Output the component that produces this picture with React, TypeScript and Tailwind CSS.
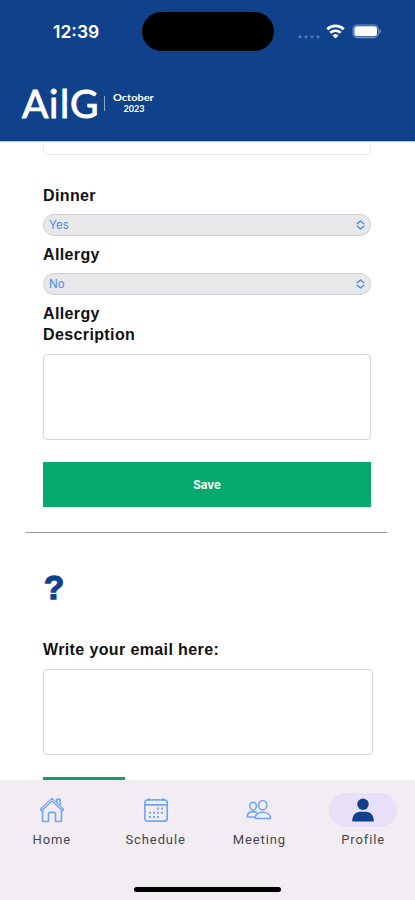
import type { ReactNode } from 'react'

function StatusBar() {
  return (
    <div className="flex h-[63px] items-center">
      <span className="ml-[53px] w-[89px] font-['Inter'] text-[17.5px] font-semibold leading-5 text-white">12:39</span>
      <div className="h-[39px] w-[132px] rounded-full bg-black" />
      <svg className="ml-6 mt-2.5" width="22" height="4" viewBox="0 0 22 4" fill="#5077b4">
        <circle cx="2" cy="1.8" r="1.6" />
        <circle cx="8" cy="1.8" r="1.6" />
        <circle cx="14" cy="1.8" r="1.6" />
        <circle cx="20" cy="1.8" r="1.6" />
      </svg>
      <svg className="ml-1.5" width="19" height="15" viewBox="0 0 19 15" fill="none" stroke="#fff" strokeWidth="2.6">
        <path d="M1.2 5.2a12 12 0 0 1 16.6 0" />
        <path d="M4.3 8.8a7.6 7.6 0 0 1 10.4 0" />
        <path d="M9.5 14.4 6.5 11.4a4.4 4.4 0 0 1 6 0z" fill="#fff" stroke="none" />
      </svg>
      <svg className="ml-[7px]" width="30" height="15" viewBox="0 0 30 15">
        <rect x="1.1" y="1" width="25" height="12.6" rx="4" fill="none" stroke="#7892c3" strokeWidth="1.2" />
        <rect x="2.4" y="2.3" width="22.6" height="10" rx="2.8" fill="#fff" />
        <path d="M27.4 5.2v4.4c1.1-.4 1.7-1.2 1.7-2.2s-.6-1.8-1.7-2.2z" fill="#7892c3" />
      </svg>
    </div>
  )
}

function Header() {
  return (
    <header className="h-[142px] shrink-0 border-b border-[#b4c3dd] bg-[#10428c]">
      <StatusBar />
      <div className="flex h-20 items-center pl-[22px] text-white">
        <span className="flex w-[82px] whitespace-nowrap font-['Lato'] text-[39px] leading-[44px] [-webkit-text-stroke:0.9px_white]">
          <span className="w-[27px]">A</span>
          <span className="w-[11px]">i</span>
          <span className="w-2.5">l</span>
          <span>G</span>
        </span>
        <span className="h-[15px] w-px bg-[#8ca5cd]" />
        <p className="ml-2 w-[42px] whitespace-nowrap text-center font-['Lato'] text-[9px] font-bold leading-[11px]">
          <span className="block origin-left scale-x-[1.22] text-left">October</span>
          <span className="block">2023</span>
        </p>
      </div>
    </header>
  )
}

function Select({ value }: { value: string }) {
  return (
    <div className="flex h-[22px] items-center justify-between rounded-full border border-[#cfcfd0] bg-[#e8e8ea] px-[5px] font-['Inter'] text-[11.5px] text-[#3f8bf2]">
      <span className="pt-0.5">{value}</span>
      <svg width="9" height="10" viewBox="0 0 9 10" fill="none" stroke="currentColor" strokeWidth="1.4" strokeLinecap="round" strokeLinejoin="round">
        <path d="M1.2 3.7 4.5 1l3.3 2.7M1.2 6.3 4.5 9l3.3-2.7" />
      </svg>
    </div>
  )
}

function Label({ children }: { children: ReactNode }) {
  return <div className="font-['Liberation_Sans'] text-base font-bold leading-[21px] tracking-[0.38px] text-[#111]">{children}</div>
}

function NavItem({ label, active, children }: { label: string; active?: boolean; children: ReactNode }) {
  return (
    <a href="#" className="flex w-[103.75px] flex-col items-center">
      <span className={active ? 'flex h-[34px] w-[68px] items-center justify-center rounded-full bg-[#e8dff8]' : 'flex h-[34px] w-[68px] items-center justify-center'}>
        {children}
      </span>
      <span className="mt-[5px] font-['Roboto'] text-[13px] leading-4 tracking-[0.9px] text-[#49454f]">{label}</span>
    </a>
  )
}

function BottomNav() {
  return (
    <nav className="flex h-[120px] shrink-0 flex-col items-center bg-[#f2edf3]">
      <div className="flex w-full pt-[13px]">
        <NavItem label="Home">
          <svg width="26" height="26" viewBox="0 0 26 26" fill="none" stroke="#70a6f4" strokeWidth="1.6" strokeLinejoin="round">
            <path d="M3.5 11.5v13h6v-7.2c0-1.2.7-1.9 1.8-1.9h3.4c1.1 0 1.8.7 1.8 1.9v7.2h6v-13" />
            <path d="m1.2 12.4 11.8-11 11.8 11-1.4 1.3L13 4 2.6 13.7z" strokeWidth="1.2" />
            <path d="M17.8 5.5V2.2h3.4v6.4" />
          </svg>
        </NavItem>
        <NavItem label="Schedule">
          <svg width="26" height="26" viewBox="0 0 26 26" fill="none" stroke="#70a6f4" strokeWidth="1.7">
            <rect x="1.8" y="2.8" width="22.4" height="21.4" rx="3" />
            <path d="M2 7.8h22M5.8 1v3M20.2 1v3" />
            <path d="M14 11.5h2m2 0h2M6 15.8h2m2 0h2m2 0h2m2 0h2M6 20h2m2 0h2m2 0h2" strokeWidth="2" />
          </svg>
        </NavItem>
        <NavItem label="Meeting">
          <svg width="26" height="22" viewBox="0 0 26 22" fill="none" stroke="#70a6f4" strokeWidth="1.6" strokeLinejoin="round">
            <ellipse cx="16.7" cy="6.2" rx="4.1" ry="4.7" />
            <path d="M9.2 19.5c0-4 3-6.2 7.5-6.2s7.8 2.2 7.8 6.2z" />
            <ellipse cx="7.1" cy="7.1" rx="3.3" ry="3.9" />
            <path d="M8.8 18H1.2c0-3.6 2.4-5.4 5.9-5.4 1.6 0 2.8.3 3.8 1" />
          </svg>
        </NavItem>
        <NavItem label="Profile" active>
          <svg width="24" height="26" viewBox="0 0 24 26" fill="#10428c">
            <circle cx="12" cy="7.2" r="5.7" />
            <path d="M1.2 24.5c0-6.2 3-9.8 8-9.8h5.6c5 0 8 3.6 8 9.8z" />
          </svg>
        </NavItem>
      </div>
      <div className="mt-[39px] h-[5px] w-[147px] rounded-full bg-black" />
    </nav>
  )
}

export default function App() {
  return (
    <div className="flex h-[900px] w-[415px] flex-col overflow-hidden bg-white">
      <Header />
      <main className="min-h-0 flex-1 overflow-hidden">
        <section className="pl-[43px] pr-[44px]">
          <div className="h-[13px] rounded-b border border-t-0 border-[#ececec]" />
          <div className="mt-[30px]">
            <Label>Dinner</Label>
          </div>
          <div className="mb-2 mt-2">
            <Select value="Yes" />
          </div>
          <Label>Allergy</Label>
          <div className="mb-2 mt-2">
            <Select value="No" />
          </div>
          <Label>Allergy<br />Description</Label>
          <div className="mt-[9px] h-[86px] rounded border border-[#d4d4d4]" />
          <button className="mt-[22px] block h-[45px] w-full bg-[#07aa6d] pt-0.5 font-['Inter'] text-[11.5px] font-bold text-white">Save</button>
        </section>
        <div className="ml-[26px] mt-[25px] h-px w-[361px] bg-[#999]" />
        <section className="pl-[43px]">
          <div className="mt-9 h-[38px] pl-px font-['Liberation_Sans'] text-[33px] font-bold leading-[38px] text-[#10428c] [-webkit-text-stroke:1.4px_#10428c]">?</div>
          <div className="mt-8">
            <Label>Write your email here:</Label>
          </div>
          <div className="mt-[9px] h-[86px] w-[330px] rounded border border-[#d4d4d4]" />
          <div className="mt-[22px] h-[45px] w-[82px] bg-[#189d60]" />
        </section>
      </main>
      <BottomNav />
    </div>
  )
}
